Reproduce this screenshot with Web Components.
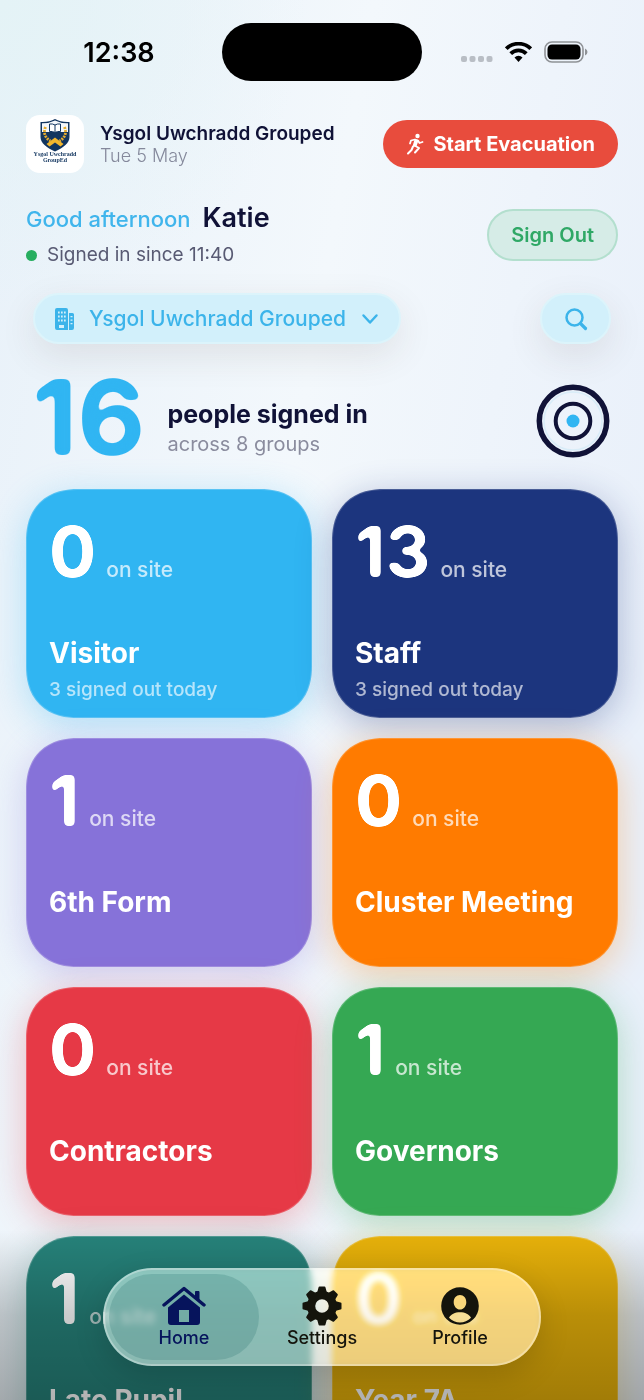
<!DOCTYPE html>
<html lang="en">
<head>
<meta charset="utf-8">
<meta name="viewport" content="width=device-width, initial-scale=1">
<title>Sign in dashboard</title>
<style>
  html, body {
    margin: 0;
    height: 100%;
  }

  body {
    font-family: Inter, "Liberation Sans", sans-serif;
    color: #101237;
    --color-sky: #30b5f2;
    --color-ink: #101237;
    --color-green: #27ae60;
    --color-red: #e84c3d;
  }
</style>
</head>
<body>
<app-screen>
  <status-bar slot="top" time="12:38"></status-bar>
  <school-header name="Ysgol Uwchradd Grouped" date="Tue 5 May"></school-header>
  <user-greeting name="Katie" since="11:40">Good afternoon</user-greeting>
  <site-filter site="Ysgol Uwchradd Grouped"></site-filter>
  <people-summary count="16" groups="8"></people-summary>
  <group-grid>
    <group-card count="0" name="Visitor" color="#30b5f2" note="3 signed out today"></group-card>
    <group-card count="13" name="Staff" color="#1c357e" note="3 signed out today"></group-card>
    <group-card count="1" name="6th Form" color="#8672d9"></group-card>
    <group-card count="0" name="Cluster Meeting" color="#ff7b00"></group-card>
    <group-card count="0" name="Contractors" color="#e63946"></group-card>
    <group-card count="1" name="Governors" color="#35a853"></group-card>
    <group-card count="1" name="Late Pupil" color="#26827a"></group-card>
    <group-card count="0" name="Year 7A" color="#e8b20a"></group-card>
  </group-grid>
  <tab-bar slot="bottom">
    <tab-item label="Home" href="#home" active>
      <svg width="44" height="40" viewBox="0 0 44 40" fill="currentColor" aria-hidden="true">
        <path d="M2 19 22 2.500 42 19" fill="none" stroke="currentColor" stroke-width="3.400" stroke-linejoin="round" stroke-linecap="round"/>
        <path d="M33.500 5.500h3.500v8.500l-3.500-3z" stroke="currentColor" stroke-linejoin="round"/>
        <path fill-rule="evenodd" d="M22 8.500 38 21.500V36a3 3 0 0 1-3 3H9a3 3 0 0 1-3-3V21.500zM17 24v12h10V24z"/>
      </svg>
    </tab-item>
    <tab-item label="Settings" href="#settings">
      <svg width="40" height="40" viewBox="-20 -20 40 40" aria-hidden="true">
        <g fill="currentColor">
          <path id="tooth" d="M-5-13-3.500-18.500Q-3.300-19.500-2.500-19.500h5Q3.300-19.500 3.500-18.500L5-13z"/>
          <use href="#tooth" transform="rotate(45)"/>
          <use href="#tooth" transform="rotate(90)"/>
          <use href="#tooth" transform="rotate(135)"/>
          <use href="#tooth" transform="rotate(180)"/>
          <use href="#tooth" transform="rotate(225)"/>
          <use href="#tooth" transform="rotate(270)"/>
          <use href="#tooth" transform="rotate(315)"/>
          <path fill-rule="evenodd" d="M0-15A15 15 0 1 1 0 15 15 15 0 1 1 0-15M0-6.800A6.800 6.800 0 1 0 0 6.800 6.800 6.800 0 1 0 0-6.800"/>
        </g>
      </svg>
    </tab-item>
    <tab-item label="Profile" href="#profile">
      <svg width="40" height="40" viewBox="0 0 40 40" fill="currentColor" aria-hidden="true">
        <path fill-rule="evenodd" d="M20 1.200a18.800 18.800 0 1 1 0 37.600 18.800 18.800 0 1 1 0-37.600M20 9c-3.700 0-6.300 3-6.300 7.200 0 4 2.800 7.300 6.300 7.300s6.300-3.300 6.300-7.300C26.300 12 23.700 9 20 9m0 17.300c-5 0-9.200 2-11 5.500 3 3 7 4.700 11 4.700s8-1.700 11-4.700c-1.800-3.500-6-5.500-11-5.500"/>
      </svg>
    </tab-item>
  </tab-bar>
</app-screen>

<script>
class AppScreen extends HTMLElement {
  constructor() {
    super();
    this.attachShadow({ mode: "open" });
    this.shadowRoot.innerHTML = `
      <style>
        :host {
          display: flex;
          flex-direction: column;
          position: relative;
          height: 100vh;
          overflow: hidden;
          background:
            radial-gradient(circle at 0 0, #e4f3f6, transparent 20%),
            linear-gradient(100deg, #e8f1f9, #f3f8fc 42%, #e9f0fa 85%, #e8f0fa);
        }

        main {
          flex: 1;
          min-height: 0;
          overflow-y: auto;
          scrollbar-width: none;
          padding: 0 26px;
        }

        footer {
          position: absolute;
          inset: auto 0 0;
          display: flex;
          justify-content: center;
          padding: 38px 24px 34px;
          background: linear-gradient(rgba(0,0,0,0), rgba(0,0,0,0.2) 50%, rgba(0,0,0,0.3));
        }
      </style>
      <slot name="top"></slot>
      <main><slot></slot></main>
      <footer><slot name="bottom"></slot></footer>
    `;
  }
}

class StatusBar extends HTMLElement {
  constructor() {
    super();
    this.attachShadow({ mode: "open" });
  }

  connectedCallback() {
    this.shadowRoot.innerHTML = `
      <style>
        :host {
          display: grid;
          grid-template-columns: 1fr 200px 1fr;
          align-items: center;
          padding: 23px 0 34px;
          color: black;
        }

        time {
          font-size: 27px;
          font-weight: 600;
          line-height: 32px;
          text-align: center;
          padding: 2px 0 0 16px;
        }

        .island {
          height: 58px;
          border-radius: 29px;
          background: black;
        }

        .signals {
          display: flex;
          align-items: center;
          justify-content: center;
          gap: 12px;
          padding-right: 18px;
        }
      </style>
      <time>${this.getAttribute("time")}</time>
      <div class="island"></div>
      <div class="signals">
        <svg width="32" height="20" viewBox="0 0 32 20" fill="#b9bec5" aria-hidden="true">
          <rect x="0" y="14" width="6" height="6" rx="2"/>
          <rect x="8.500" y="14" width="6" height="6" rx="2"/>
          <rect x="17" y="14" width="6" height="6" rx="2"/>
          <rect x="25.500" y="14" width="6" height="6" rx="2"/>
        </svg>
        <svg width="27" height="20" viewBox="0 0 27 20" fill="none" stroke="black" stroke-width="3.800" aria-hidden="true">
          <path d="M1.300 6.700a17.400 17.400 0 0 1 24.400 0"/>
          <path d="M5.700 11.700a11 11 0 0 1 15.600 0"/>
          <path d="M9.500 15.500a5.600 5.600 0 0 1 8 0L13.500 20z" fill="black" stroke="none"/>
        </svg>
        <svg width="44" height="22" viewBox="0 0 44 22" aria-hidden="true">
          <rect x="1" y="1" width="38" height="20" rx="7" fill="none" stroke="#8f9296" stroke-width="1.600"/>
          <rect x="3.500" y="3.500" width="33" height="15" rx="4.500"/>
          <path d="M41 7.500q2.500 1 2.500 3.500T41 14.500z" fill="#8f9296"/>
        </svg>
      </div>
    `;
  }
}

class SchoolHeader extends HTMLElement {
  constructor() {
    super();
    this.attachShadow({ mode: "open" });
  }

  connectedCallback() {
    this.shadowRoot.innerHTML = `
      <style>
        :host {
          display: flex;
          align-items: center;
          gap: 16px;
        }

        .logo {
          flex: none;
          width: 58px;
          height: 58px;
          border-radius: 14px;
          background: white;
        }

        .school {
          flex: 1;
        }

        h1, p {
          margin: 0;
        }

        h1 {
          font-size: 19px;
          font-weight: 600;
          line-height: 24px;
        }

        p {
          font-size: 18px;
          font-weight: 300;
          line-height: 20px;
          color: #84889b;
        }

        button {
          display: flex;
          align-items: center;
          gap: 8px;
          height: 48px;
          padding: 0 23px;
          border: 0;
          border-radius: 24px;
          background: var(--color-red);
          color: white;
          font: 700 20px/24px Inter, "Liberation Sans", sans-serif;
          white-space: nowrap;
        }
      </style>
      <svg class="logo" viewBox="0 0 58 58" role="img" aria-label="School crest">
        <path d="M29 4Q35 7.500 43.500 7v15c0 6-6 10.500-14.500 14.500C20.500 32.500 14.500 28 14.500 22V7Q23 7.500 29 4z" fill="#12355f"/>
        <path d="M29 5.500Q35 8.500 42 8.300V17H16V8.300Q23 8.500 29 5.500z" fill="#f4f7fa"/>
        <path d="M23.500 9q3-.5 5.500 1 2.500-1.500 5.500-1v7.500q-3-.5-5.500 1-2.500-1.500-5.500-1zM29 10v7.500" fill="white" stroke="#12355f" stroke-width="1"/>
        <path d="M19.500 12q-3.500 9 5 14M38.500 12q3.500 9-5 14" fill="none" stroke="#e4ab2f" stroke-width="2.800" stroke-dasharray="2 1"/>
        <path d="m20.500 29 8.500-6.500 8.500 6.500-3 2.500-5.500-4-5.500 4z" fill="#f2b62d"/>
        <text x="29" y="41" font-family="Liberation Serif, serif" font-size="6" font-weight="700" text-anchor="middle" fill="#12355f">Ysgol Uwchradd</text>
        <text x="29" y="47" font-family="Liberation Serif, serif" font-size="6" font-weight="700" text-anchor="middle" fill="#12355f">GroupEd</text>
      </svg>
      <div class="school">
        <h1>${this.getAttribute("name")}</h1>
        <p>${this.getAttribute("date")}</p>
      </div>
      <button type="button">
        <svg width="19" height="22" viewBox="0 0 19 22" fill="none" stroke="currentColor" stroke-width="1.800" stroke-linecap="round" stroke-linejoin="round" aria-hidden="true">
          <circle cx="11.500" cy="3" r="2.200" fill="currentColor" stroke="none"/>
          <path d="M4 10.500 5 7.500 9 6.500l3 1L13.500 10l3-1"/>
          <path d="M9.500 7.500 8 12.500M11 8 9.500 12.500" stroke-width="2.400"/>
          <path d="m8.500 12.500 4.500 2.500-4 4.500M7 13.500 5.500 17 2 20.500" stroke-width="2"/>
        </svg>
        Start Evacuation
      </button>
    `;
  }
}

class UserGreeting extends HTMLElement {
  constructor() {
    super();
    this.attachShadow({ mode: "open" });
  }

  connectedCallback() {
    this.shadowRoot.innerHTML = `
      <style>
        :host {
          display: flex;
          align-items: center;
          justify-content: space-between;
          margin-top: 29px;
        }

        h2, p {
          display: flex;
          margin: 0;
        }

        h2 {
          align-items: baseline;
          gap: 12px;
          font-size: 22px;
          font-weight: 500;
          line-height: 32px;
          color: #40b5ec;
        }

        strong {
          font-size: 27px;
          font-weight: 600;
          color: var(--color-ink);
        }

        p {
          align-items: center;
          gap: 10px;
          margin-top: 8px;
          font-size: 19px;
          line-height: 24px;
          color: #585a73;
        }

        i {
          width: 11px;
          height: 11px;
          border-radius: 50%;
          background: var(--color-green);
        }

        button {
          height: 52px;
          padding: 0 22px;
          border: 2px solid #b3dfce;
          border-radius: 26px;
          background: #d6ece7;
          color: #2fa866;
          font: 600 20px/24px Inter, "Liberation Sans", sans-serif;
        }
      </style>
      <div>
        <h2><slot></slot> <strong>${this.getAttribute("name")}</strong></h2>
        <p><i></i>Signed in since ${this.getAttribute("since")}</p>
      </div>
      <button type="button">Sign Out</button>
    `;
  }
}

class SiteFilter extends HTMLElement {
  constructor() {
    super();
    this.attachShadow({ mode: "open" });
  }

  connectedCallback() {
    this.shadowRoot.innerHTML = `
      <style>
        :host {
          display: flex;
          justify-content: space-between;
          margin-top: 26px;
          padding: 0 7px;
          color: #3cb4ea;
        }

        label, button {
          display: flex;
          align-items: center;
          box-sizing: border-box;
          height: 51px;
          border: 2px solid #dcf4fb;
          border-radius: 26px;
          background: #d2f0fb;
          box-shadow: 0 12px 36px rgba(70,50,40,0.1);
          color: inherit;
        }

        label {
          gap: 14px;
          padding: 0 20px;
        }

        select {
          appearance: none;
          margin: 0;
          padding: 0;
          border: 0;
          background: none;
          color: inherit;
          font: 500 21px/28px Inter, "Liberation Sans", sans-serif;
        }

        button {
          justify-content: center;
          width: 71px;
          padding: 0;
        }
      </style>
      <label>
        <svg width="20" height="22" viewBox="0 0 20 22" fill="currentColor" aria-hidden="true">
          <path fill-rule="evenodd" d="M2 0h9a2 2 0 0 1 2 2v20H2a2 2 0 0 1-2-2V2a2 2 0 0 1 2-2M3 3.500v2h1.700v-2zm3 0v2h1.700v-2zm3 0v2h1.700v-2zm-6 4v2h1.700v-2zm3 0v2h1.700v-2zm3 0v2h1.700v-2zm-6 4v2h1.700v-2zm3 0v2h1.700v-2zm3 0v2h1.700v-2zM4 17v3h5v-3z"/>
          <path fill-rule="evenodd" d="M14 5h3.500A1.500 1.500 0 0 1 19 6.500V20a2 2 0 0 1-2 2h-3zM15.500 8v1.300h2V8zm0 3.500v1.300h2v-1.300zm0 3.500v1.300h2V15z"/>
        </svg>
        <select aria-label="Site"><option>${this.getAttribute("site")}</option></select>
        <svg width="18" height="18" viewBox="0 0 18 18" fill="none" stroke="currentColor" stroke-width="2.500" stroke-linecap="round" stroke-linejoin="round" aria-hidden="true">
          <path d="m2.500 5.500 6.500 7 6.500-7"/>
        </svg>
      </label>
      <button type="button" aria-label="Search">
        <svg width="24" height="24" viewBox="0 0 24 24" fill="none" stroke="currentColor" stroke-linecap="round" aria-hidden="true">
          <circle cx="10.500" cy="10.500" r="8" stroke-width="2.500"/>
          <path d="m16.500 16.500 5 5" stroke-width="3.200"/>
        </svg>
      </button>
    `;
  }
}

// Number with soft, rounded stroke ends
class RoundCount extends HTMLElement {
  constructor() {
    super();
    this.attachShadow({ mode: "open" });
  }

  connectedCallback() {
    const soft = this.getAttribute("soft") || 2;
    this.shadowRoot.innerHTML = `
      <style>
        :host {
          display: block;
        }

        span {
          display: block;
          filter: url(#round);
        }

        svg {
          position: absolute;
        }
      </style>
      <svg width="0" height="0" aria-hidden="true">
        <filter id="round" color-interpolation-filters="sRGB">
          <feGaussianBlur stdDeviation="${soft}"/>
          <feColorMatrix values="1 0 0 0 0  0 1 0 0 0  0 0 1 0 0  0 0 0 8 -3.500"/>
        </filter>
      </svg>
      <span><slot></slot></span>
    `;
  }
}

class PeopleSummary extends HTMLElement {
  constructor() {
    super();
    this.attachShadow({ mode: "open" });
  }

  connectedCallback() {
    this.shadowRoot.innerHTML = `
      <style>
        :host {
          display: flex;
          align-items: flex-end;
          gap: 22px;
          margin: 32px 0 31px;
          padding: 0 8px 0 6px;
        }

        round-count {
          font-size: 105px;
          font-weight: 700;
          line-height: 82px;
          color: var(--color-sky);
        }

        .text {
          flex: 1;
        }

        h2, p {
          margin: 0;
        }

        h2 {
          font-size: 25px;
          font-weight: 700;
          line-height: 32px;
        }

        p {
          font-size: 20px;
          line-height: 28px;
          color: #8a8c9e;
        }
      </style>
      <round-count soft="3">${this.getAttribute("count")}</round-count>
      <div class="text">
        <h2>people signed in</h2>
        <p>across ${this.getAttribute("groups")} groups</p>
      </div>
      <svg width="74" height="74" viewBox="-37 -37 74 74" fill="none" stroke="#101237" aria-hidden="true">
        <circle r="33.700" stroke-width="5.500"/>
        <circle r="29" stroke="#d8ecf8" stroke-width="1.500"/>
        <circle r="17.300" stroke-width="4"/>
        <circle r="6.500" fill="#30b5f2" stroke="none"/>
      </svg>
    `;
  }
}

class GroupGrid extends HTMLElement {
  constructor() {
    super();
    this.attachShadow({ mode: "open" });
    this.shadowRoot.innerHTML = `
      <style>
        :host {
          display: grid;
          grid-template-columns: 1fr 1fr;
          gap: 20px;
          padding-bottom: 140px;
        }
      </style>
      <slot></slot>
    `;
  }
}

class GroupCard extends HTMLElement {
  constructor() {
    super();
    this.attachShadow({ mode: "open" });
  }

  connectedCallback() {
    const note = this.getAttribute("note");
    this.style.setProperty("--card-color", this.getAttribute("color"));
    this.shadowRoot.innerHTML = `
      <style>
        :host {
          display: block;
        }

        button {
          display: flex;
          flex-direction: column;
          justify-content: flex-start;
          box-sizing: border-box;
          width: 100%;
          min-height: 229px;
          padding: 22px 22px 10px;
          border: 1px solid rgba(255,255,255,0.2);
          border-radius: 48px;
          background: var(--card-color) border-box;
          box-shadow: 0 8px 36px color-mix(in srgb, var(--card-color) 32%, transparent);
          color: white;
          font: inherit;
          text-align: left;
        }

        @supports (corner-shape: squircle) {
          button {
            border-radius: 52px;
            corner-shape: superellipse(1.2);
          }
        }

        .count {
          display: flex;
          align-items: baseline;
          gap: 10px;
          font-size: 21px;
          font-weight: 500;
          line-height: 24px;
          color: rgba(255,255,255,0.72);
        }

        round-count {
          font-size: 70px;
          font-weight: 700;
          line-height: 80px;
          color: white;
        }

        .name {
          margin-top: 43px;
          font-size: 28px;
          font-weight: 700;
          line-height: 36px;
        }

        .note {
          margin-top: 5px;
          font-size: 19px;
          font-weight: 500;
          line-height: 28px;
          color: rgba(255,255,255,0.65);
        }
      </style>
      <button type="button">
        <span class="count"><round-count>${this.getAttribute("count")}</round-count> on site</span>
        <span class="name">${this.getAttribute("name")}</span>
        ${note ? `<span class="note">${note}</span>` : ""}
      </button>
    `;
  }
}

class TabBar extends HTMLElement {
  constructor() {
    super();
    this.attachShadow({ mode: "open" });
    this.shadowRoot.innerHTML = `
      <style>
        :host {
          display: block;
          width: 100%;
          max-width: 438px;
        }

        nav {
          display: flex;
          box-sizing: border-box;
          padding: 4px 10px;
          border: 2px solid rgba(255,255,255,0.3);
          border-radius: 49px;
          background: rgba(255,252,245,0.5);
          backdrop-filter: blur(3px) brightness(1.2) saturate(1.2);
          box-shadow: 0 10px 30px rgba(0,0,0,0.15);
        }
      </style>
      <nav><slot></slot></nav>
    `;
  }
}

class TabItem extends HTMLElement {
  constructor() {
    super();
    this.attachShadow({ mode: "open" });
  }

  connectedCallback() {
    this.shadowRoot.innerHTML = `
      <style>
        :host {
          flex: 1;
          color: #14140c;
        }

        :host([active]) {
          color: #06145c;
        }

        a {
          display: flex;
          flex-direction: column;
          align-items: center;
          position: relative;
          padding: 12px 0 10px;
          color: inherit;
          font-size: 18px;
          font-weight: 500;
          line-height: 24px;
          text-decoration: none;
        }

        :host([active]) a::before {
          content: "";
          position: absolute;
          inset: 0 -6px;
          z-index: -1;
          border-radius: 43px;
          background: rgba(30,110,105,0.22);
        }
      </style>
      <a href="${this.getAttribute("href")}"><slot></slot>${this.getAttribute("label")}</a>
    `;
  }
}

customElements.define("app-screen", AppScreen);
customElements.define("status-bar", StatusBar);
customElements.define("school-header", SchoolHeader);
customElements.define("user-greeting", UserGreeting);
customElements.define("site-filter", SiteFilter);
customElements.define("round-count", RoundCount);
customElements.define("people-summary", PeopleSummary);
customElements.define("group-grid", GroupGrid);
customElements.define("group-card", GroupCard);
customElements.define("tab-bar", TabBar);
customElements.define("tab-item", TabItem);
</script>
</body>
</html>
